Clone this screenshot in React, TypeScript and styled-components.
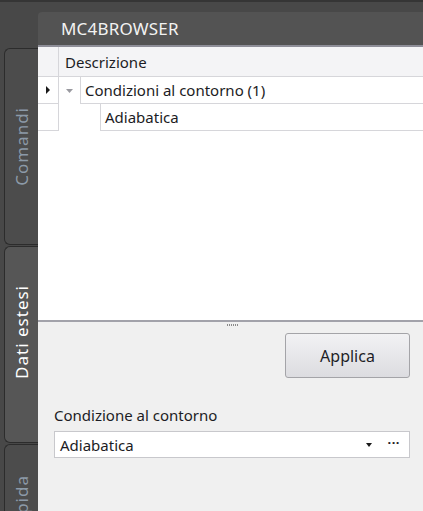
import styled, { createGlobalStyle } from "styled-components"

const Global = createGlobalStyle`
html, body { margin:0; padding:0; }
body {
  width:423px;
  height:511px;
  overflow:hidden;
  background:#484848;
  font-family:"Noto Sans", "Open Sans", sans-serif;
}
`

const Page = styled.div`
display:flex;
width:423px;
height:511px;
border-top:2px solid #353535;
box-sizing:border-box;
overflow:hidden;
`

const TabStrip = styled.div`
width:38px;
flex-shrink:0;
display:flex;
flex-direction:column;
gap:1px;
padding-top:46px;
padding-left:4px;
box-sizing:border-box;
`

const Tab = styled.div<{ $active?: boolean; $size: number; $top?: number }>`
height:${p => p.$size}px;
flex-shrink:0;
display:flex;
align-items:${p => (p.$top !== undefined ? "flex-start" : "center")};
justify-content:center;
background:${p => (p.$active ? "#565656" : "#4c4c4c")};
border:1px solid #2c2c2c;
border-right:none;
border-radius:6px 0 0 6px;
box-sizing:border-box;
overflow:hidden;
padding-top:${p => p.$top ?? 0}px;
padding-bottom:${p => (p.$active ? "26px" : "0")};
`

const TabLabel = styled.span<{ $active?: boolean }>`
writing-mode:vertical-rl;
transform:rotate(180deg);
white-space:nowrap;
font-size:17px;
letter-spacing:1px;
color:${p => (p.$active ? "#ffffff" : "#8c9aa8")};
`

const Main = styled.div`
flex:1;
display:flex;
flex-direction:column;
padding-top:10px;
min-width:0;
`

const TitleBar = styled.div`
height:33px;
flex-shrink:0;
background:#535353;
border-radius:4px 0 0 0;
border-bottom:2px solid #8e8e98;
display:flex;
align-items:center;
padding-left:23px;
color:#f2f2f2;
font-size:17px;
letter-spacing:0.2px;
`

const Grid = styled.div`
height:273px;
flex-shrink:0;
background:#ffffff;
display:flex;
flex-direction:column;
font-size:15px;
color:#1c1c24;
`

const HeaderRow = styled.div`
display:flex;
height:29px;
flex-shrink:0;
background:#f4f4f6;
border-bottom:1px solid #d6d6da;
`

const RowHeadCell = styled.div`
width:20px;
flex-shrink:0;
border-right:1px solid #d6d6da;
border-bottom:1px solid #d6d6da;
display:flex;
align-items:center;
justify-content:center;
`

const HeaderHead = styled(RowHeadCell)`
border-bottom:none;
`

const HeaderCell = styled.div`
flex:1;
display:flex;
align-items:center;
padding-left:6px;
`

const Row = styled.div`
display:flex;
height:27px;
flex-shrink:0;
`

const Indent = styled.div<{ $width: number }>`
width:${p => p.$width}px;
flex-shrink:0;
display:flex;
align-items:center;
justify-content:center;
`

const Cell = styled.div`
flex:1;
border-left:1px solid #d6d6da;
border-bottom:1px solid #d6d6da;
display:flex;
align-items:center;
padding-left:4px;
white-space:nowrap;
`

const Splitter = styled.div`
height:4px;
flex-shrink:0;
border-top:2px solid #a2a2aa;
background:#f0f0f0;
display:flex;
justify-content:center;
align-items:flex-end;
`

const Grip = styled.div`
width:12px;
height:2px;
background:repeating-linear-gradient(90deg, #8a8a8a 0 1px, transparent 1px 2px);
margin-left:5px;
`

const Panel = styled.div`
flex:1;
background:#f0f0f0;
display:flex;
flex-direction:column;
padding:7px 13px 0 16px;
font-size:15px;
color:#1c1c24;
`

const ButtonRow = styled.div`
display:flex;
justify-content:flex-end;
`

const ApplyButton = styled.button`
width:125px;
height:45px;
border:1px solid #a4a4a8;
border-radius:3px;
background:linear-gradient(#f2f2f4, #dcdce0);
font-family:inherit;
font-size:16px;
color:#1e1e26;
padding:0;
`

const FieldLabel = styled.div`
margin-top:27px;
height:20px;
display:flex;
align-items:center;
`

const Combo = styled.div`
margin-top:6px;
height:27px;
border:1px solid #c8c8cc;
background:#ffffff;
display:flex;
align-items:center;
padding-left:5px;
box-sizing:border-box;
`

const ComboText = styled.span`
flex:1;
`

const ComboArrow = styled.span`
width:0;
height:0;
border-left:3px solid transparent;
border-right:3px solid transparent;
border-top:4px solid #1a1a1a;
margin-right:16px;
`

const Ellipsis = styled.span`
font-size:13px;
font-weight:bold;
letter-spacing:0.5px;
margin-right:9px;
line-height:1;
padding-bottom:4px;
`

const RowPointer = () => (
  <svg width="5" height="8" viewBox="0 0 5 8">
    <path d="M0 0 L4 4 L0 8 Z" fill="#1a1a1a" />
  </svg>
)

const ExpandGlyph = () => (
  <svg width="7" height="4" viewBox="0 0 7 4">
    <path d="M0 0 L7 0 L3.5 4 Z" fill="#9a9aa0" />
  </svg>
)

const App = () => {
  return (
    <>
      <Global />
      <Page>
        <TabStrip>
          <Tab $size={197}>
            <TabLabel>Comandi</TabLabel>
          </Tab>
          <Tab $size={197} $active>
            <TabLabel $active>Dati estesi</TabLabel>
          </Tab>
          <Tab $size={130} $top={30}>
            <TabLabel>Modifica rapida</TabLabel>
          </Tab>
        </TabStrip>
        <Main>
          <TitleBar>MC4BROWSER</TitleBar>
          <Grid>
            <HeaderRow>
              <HeaderHead />
              <HeaderCell>Descrizione</HeaderCell>
            </HeaderRow>
            <Row>
              <RowHeadCell>
                <RowPointer />
              </RowHeadCell>
              <Indent $width={21}>
                <ExpandGlyph />
              </Indent>
              <Cell>Condizioni al contorno (1)</Cell>
            </Row>
            <Row>
              <RowHeadCell />
              <Indent $width={41} />
              <Cell>Adiabatica</Cell>
            </Row>
          </Grid>
          <Splitter>
            <Grip />
          </Splitter>
          <Panel>
            <ButtonRow>
              <ApplyButton>Applica</ApplyButton>
            </ButtonRow>
            <FieldLabel>Condizione al contorno</FieldLabel>
            <Combo>
              <ComboText>Adiabatica</ComboText>
              <ComboArrow />
              <Ellipsis>···</Ellipsis>
            </Combo>
          </Panel>
        </Main>
      </Page>
    </>
  )
}

export default App
